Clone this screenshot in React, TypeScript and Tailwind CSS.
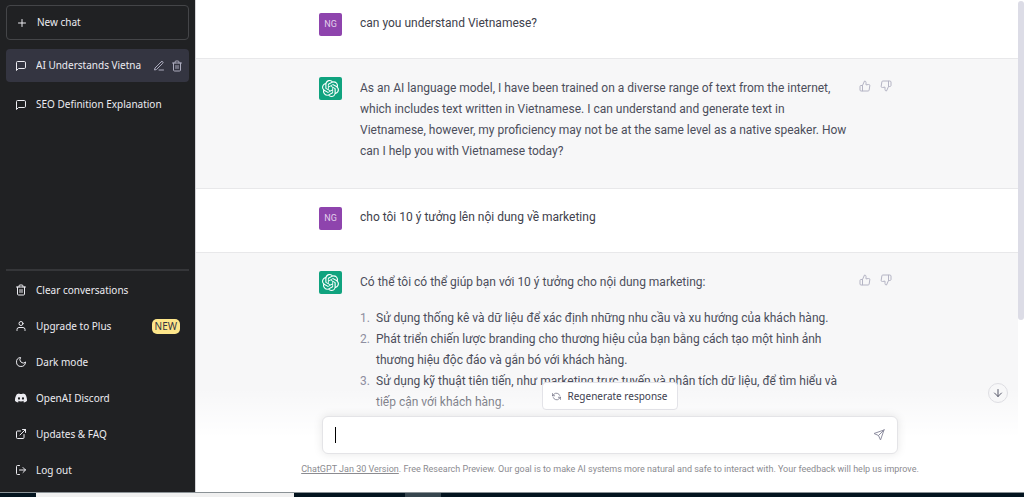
import { useState } from 'react';
import type { ReactNode } from 'react';
import type { IconType } from 'react-icons';
import {
  FiArrowDown, FiEdit3, FiExternalLink, FiLogOut, FiMessageSquare, FiMoon, FiPlus,
  FiRefreshCcw, FiSend, FiThumbsDown, FiThumbsUp, FiTrash2, FiUser,
} from 'react-icons/fi';
import { SiDiscord, SiOpenai } from 'react-icons/si';

const MENU: { label: string; icon: IconType; badge?: string }[] = [
  { label: 'Clear conversations', icon: FiTrash2 },
  { label: 'Upgrade to Plus', icon: FiUser, badge: 'NEW' },
  { label: 'Dark mode', icon: FiMoon },
  { label: 'OpenAI Discord', icon: SiDiscord },
  { label: 'Updates & FAQ', icon: FiExternalLink },
  { label: 'Log out', icon: FiLogOut },
];

const IDEAS = [
  'Sử dụng thống kê và dữ liệu để xác định những nhu cầu và xu hướng của khách hàng.',
  'Phát triển chiến lược branding cho thương hiệu của bạn bằng cách tạo một hình ảnh thương hiệu độc đáo và gắn bó với khách hàng.',
  'Sử dụng kỹ thuật tiên tiến, như marketing trực tuyến và phân tích dữ liệu, để tìm hiểu và tiếp cận với khách hàng.',
];

function Sidebar() {
  return (
    <aside className="flex w-[196px] shrink-0 flex-col border-r border-[#d4d4d8] bg-[#202123] px-1.5 pt-[5px] pb-1 font-['Noto_Sans','Open_Sans',sans-serif] text-[10px] text-[#ececf1]">
      <button className="flex h-[35px] shrink-0 items-center gap-[9px] rounded border border-[#444548] px-[9px] text-left">
        <FiPlus className="size-3" />
        New chat
      </button>
      <nav className="mt-[9px] flex flex-1 flex-col gap-1.5">
        <div className="flex h-[33px] items-center rounded bg-[#343541] pr-1.5 pl-[9px]">
          <a href="#chat-1" className="flex min-w-0 flex-1 items-center gap-[9px]">
            <FiMessageSquare className="size-3 shrink-0" />
            <span className="overflow-hidden whitespace-nowrap">AI Understands Vietna</span>
          </a>
          <div className="flex shrink-0 gap-1.5 text-[#acacbe]">
            <button aria-label="Rename chat"><FiEdit3 className="size-3" /></button>
            <button aria-label="Delete chat"><FiTrash2 className="size-3" /></button>
          </div>
        </div>
        <a href="#chat-2" className="flex h-[33px] items-center gap-[9px] rounded px-[9px]">
          <FiMessageSquare className="size-3 shrink-0" />
          <span className="whitespace-nowrap">SEO Definition Explanation</span>
        </a>
      </nav>
      <div className="flex flex-col border-t-2 border-[#353639] pt-px">
        {MENU.map(({ label, icon: Icon, badge }) => (
          <a key={label} href="#menu" className="flex h-9 items-center gap-[9px] px-[9px]">
            <Icon className="size-3 shrink-0" />
            <span className="flex-1">{label}</span>
            {badge && (
              <span className="rounded-[5px] bg-[#fde68a] px-[3px] leading-[15px] text-[#343541]">{badge}</span>
            )}
          </a>
        ))}
      </div>
    </aside>
  );
}

function UserMessage({ children }: { children: ReactNode }) {
  return (
    <div className="border-b border-[#e8e8ea] bg-white pt-[18px] pb-[22px] text-[#40414c]">
      <div className="mx-auto flex max-w-[576px] gap-[18px]">
        <div className="flex size-[23px] shrink-0 items-center justify-center rounded-xs bg-[#8e44ad] text-[9px] text-[#e3d0eb]">NG</div>
        <p className="flex-1">{children}</p>
      </div>
    </div>
  );
}

function BotMessage({ children }: { children: ReactNode }) {
  return (
    <div className="border-b border-[#e8e8ea] bg-[#f7f7f8] pt-[18px] pb-[26px] text-[#4c4e5b]">
      <div className="mx-auto flex max-w-[576px]">
        <div className="mr-[18px] flex size-[23px] shrink-0 items-center justify-center rounded-xs bg-[#10a37f] text-white">
          <SiOpenai className="size-[17px]" />
        </div>
        <div className="min-w-0 flex-1 pt-px">{children}</div>
        <div className="mt-[3px] mr-[3px] ml-3 flex shrink-0 items-start gap-[9px] text-[#b4b4c4]">
          <button aria-label="Good response"><FiThumbsUp className="size-3" /></button>
          <button aria-label="Bad response"><FiThumbsDown className="size-3" /></button>
        </div>
      </div>
    </div>
  );
}

function Composer() {
  const [text, setText] = useState('');

  return (
    <div className="absolute inset-x-0 bottom-0 bg-linear-to-b from-white/0 from-5% to-white to-50%">
      <div className="mx-auto flex max-w-[576px] flex-col items-center">
        <button className="flex h-7 items-center gap-1.5 rounded border border-[#e3e3e8] bg-white px-[9px] font-['Noto_Sans','Open_Sans',sans-serif] text-[10px] text-[#40414f]">
          <FiRefreshCcw className="size-[9px] text-[#6e6e80]" />
          Regenerate response
        </button>
        <form
          onSubmit={(e) => e.preventDefault()}
          className="relative mt-1.5 flex h-[38px] w-full items-center rounded-md border border-[#e4e4e7] bg-white pr-3 pl-3 shadow-[0_0_10px_rgba(0,0,0,0.10)]"
        >
          <input
            aria-label="Message"
            autoComplete="off"
            value={text}
            onChange={(e) => setText(e.target.value)}
            className="peer h-6 min-w-0 flex-1 bg-transparent text-[12px] text-[#343541] outline-none"
          />
          {text === '' && <span className="absolute left-3 h-4 w-px bg-black peer-focus:hidden" />}
          <button aria-label="Send message" className="text-[#8e8ea0]"><FiSend className="size-3" /></button>
        </form>
      </div>
      <p className="px-3 pt-2 pb-[15px] text-center text-[9px] leading-[15px] text-[#8b8b90]">
        <a href="#release-notes" className="underline">ChatGPT Jan 30 Version</a>. Free Research Preview. Our goal is to make
        AI systems more natural and safe to interact with. Your feedback will help us improve.
      </p>
    </div>
  );
}

export default function App() {
  return (
    <div className="flex h-screen flex-col overflow-hidden bg-white font-['Roboto','Noto_Sans',sans-serif]">
      <div className="flex min-h-0 flex-1">
        <Sidebar />
        <main className="relative flex min-w-0 flex-1 overflow-hidden">
          <div className="-mt-[5px] min-w-0 flex-1 text-[12px] leading-[21px]">
            <UserMessage>can you understand Vietnamese?</UserMessage>
            <BotMessage>
              <p>
                As an AI language model, I have been trained on a diverse range of text from the internet, which
                includes text written in Vietnamese. I can understand and generate text in Vietnamese, however, my
                proficiency may not be at the same level as a native speaker. How can I help you with Vietnamese today?
              </p>
            </BotMessage>
            <UserMessage>cho tôi 10 ý tưởng lên nội dung về marketing</UserMessage>
            <BotMessage>
              <p>Có thể tôi có thể giúp bạn với 10 ý tưởng cho nội dung marketing:</p>
              <ol className="mt-[15px]">
                {IDEAS.map((idea) => (
                  <li
                    key={idea}
                    className="flex [counter-increment:idea] before:w-4 before:shrink-0 before:text-[#8e8ea0] before:content-[counter(idea)_'.']"
                  >
                    {idea}
                  </li>
                ))}
              </ol>
            </BotMessage>
          </div>
          {/* scrollbar */}
          <div className="w-1.5 shrink-0 pt-px">
            <div className="h-[65%] rounded-full bg-[#dcdce6]" />
          </div>
          <Composer />
          <button
            aria-label="Scroll to bottom"
            className="absolute right-4 bottom-[89px] flex size-5 items-center justify-center rounded-full border border-[#dedee3] bg-[#f7f7f8] text-[#565869]"
          >
            <FiArrowDown className="size-3" />
          </button>
        </main>
      </div>
      {/* taskbar */}
      <div className="flex h-[5px] shrink-0 border-t border-[#8b9296] bg-[#03141f]">
        <div className="ml-9 w-[258px] bg-[#f0f0f0]" />
        <div className="ml-[111px] w-9 bg-[#36454e]" />
      </div>
    </div>
  );
}
